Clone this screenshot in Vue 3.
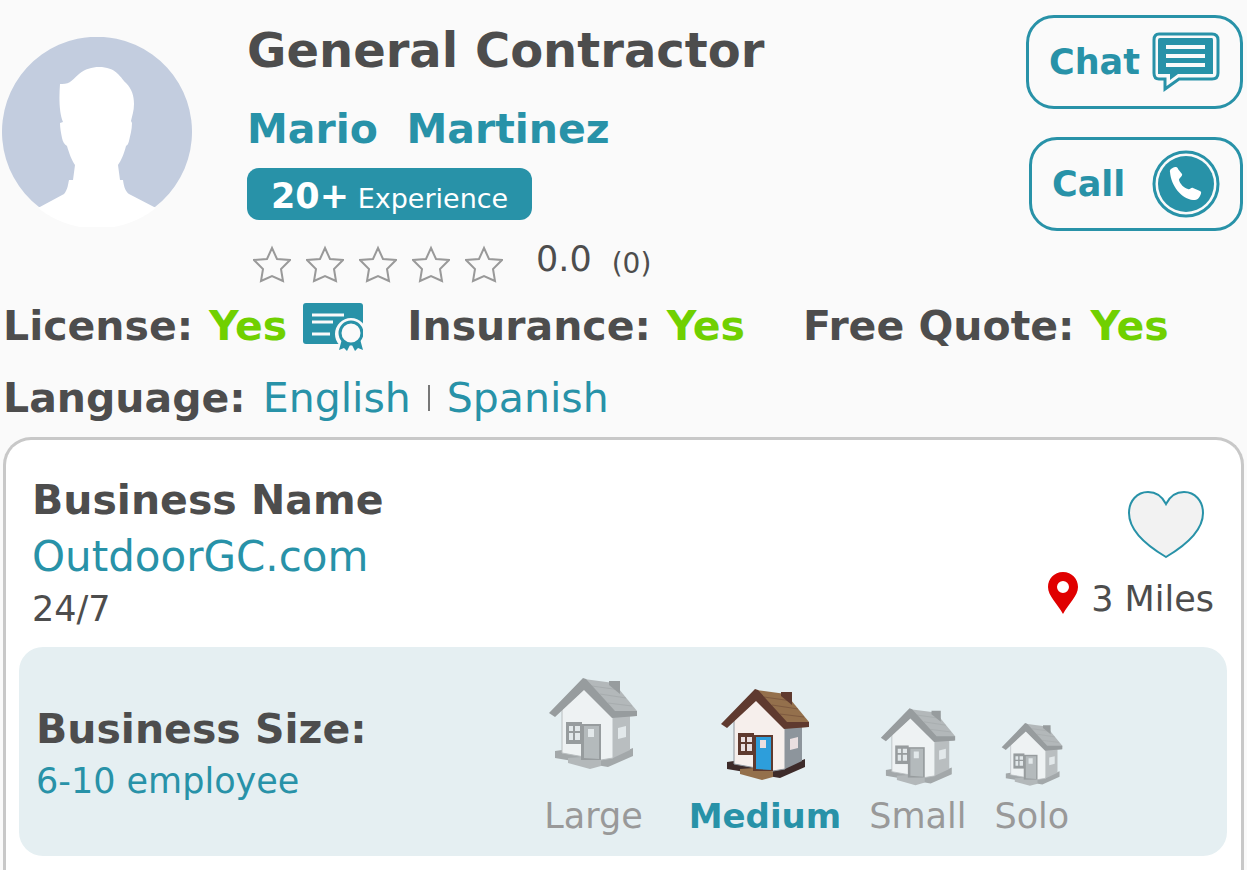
<template>
  <main class="profile">
    <header class="profile-header">
      <svg class="avatar" viewBox="0 0 190 190" aria-hidden="true">
        <path
          d="M37 170A95 95 0 1 1 153 170Z"
          fill="#c3cddf"
        />
        <path
          d="M58 47C68 48 71 42 77 37C83 32 90 30 97 30C105 30 111 32 116 37C120 41 121 43 124 46C130 52 132 59 132 67C132 74 130 79 129 84L130 86C130 93 128 99 127 104C126 108 125 108 124 109C122 117 119 124 116 128L118 143H121C122 151 124 155 127 157L154 171A95 95 0 0 1 36 171L62 157C66 152 66 147 67 143H71L73 128C70 124 67 116 65 109C62 107 61 105 60 101C59 96 58 91 58 86L61 85C57 75 57 60 58 47Z"
          fill="#fff"
        />
      </svg>

      <div class="info">
        <h1 class="title">{{ contractor.trade }}</h1>
        <h2 class="name">{{ contractor.firstName }}&nbsp; {{ contractor.lastName }}</h2>
        <p class="badge"><strong>{{ contractor.years }}</strong> Experience</p>
        <div class="rating">
          <div class="stars">
            <svg v-for="n in 5" :key="n" class="star" viewBox="0 0 38 38" aria-hidden="true">
              <path d="M19 3L24 14L37 15L28 24L30 36L19 31L8 36L10 24L1 15L14 14Z" />
            </svg>
          </div>
          <span class="score">{{ contractor.score }}</span>
          <span class="reviews">({{ contractor.reviews }})</span>
        </div>
      </div>

      <div class="actions">
        <button class="btn-action" type="button">
          Chat
          <svg class="chat-icon" viewBox="0 0 68 61" aria-hidden="true">
            <path
              d="M7 2H60Q66 2 66 8V41Q66 47 60 47H27L13 57V47H7Q2 47 2 41V8Q2 2 7 2Z"
              fill="none"
              stroke="#2892a8"
              stroke-width="3"
            />
            <path d="M8 6H60Q61 6 61 8V42H26L18 48V42H6V8Q6 6 8 6Z" fill="#2892a8" />
            <path d="M14 15H53M14 24H53M14 33H53" stroke="#fafafa" stroke-width="4" />
          </svg>
        </button>
        <button class="btn-action btn-action--call" type="button">
          Call
          <svg class="call-icon" viewBox="0 0 68 68" aria-hidden="true">
            <circle cx="34" cy="34" r="32" fill="none" stroke="#2892a8" stroke-width="3" />
            <circle cx="34" cy="34" r="28" fill="#2892a8" />
            <path
              d="M18 22C17 19 22 17 24 17C25 17 26 18 26 19L30 24C31 26 27 28 27 30C28 34 32 38 36 39C38 40 39 37 41 38L48 41C50 42 49 44 48 46C46 50 44 50 41 50C30 49 19 36 18 22Z"
              fill="#fff"
            />
          </svg>
        </button>
      </div>
    </header>

    <section class="facts">
      <p class="fact">
        License: <span class="yes">Yes</span>
        <svg class="license-icon" viewBox="0 0 60 48" aria-hidden="true">
          <path d="M3 0H57Q60 0 60 3V41H3Q0 41 0 38V3Q0 0 3 0Z" fill="#2892a8" />
          <path d="M9 12H41M9 19H30M9 31H27" stroke="#fafafa" stroke-width="3" />
          <circle cx="48" cy="31" r="16" fill="#fafafa" />
          <path d="M33 41H60V48H33Z" fill="#fafafa" />
          <path d="M39 36L36 47L41 45L44 48L48 40L52 48L55 45L60 47L57 36Z" fill="#2892a8" />
          <circle cx="48" cy="30" r="11" fill="#fafafa" stroke="#2892a8" stroke-width="3" />
        </svg>
      </p>
      <p class="fact">Insurance: <span class="yes">Yes</span></p>
      <p class="fact fact--quote">Free Quote: <span class="yes">Yes</span></p>
    </section>

    <section class="languages">
      <strong>Language:</strong>
      <ul class="language-list">
        <li v-for="language in contractor.languages" :key="language">{{ language }}</li>
      </ul>
    </section>

    <section class="card">
      <div class="business">
        <div>
          <h3 class="heading">Business Name</h3>
          <a class="site" href="#">{{ contractor.site }}</a>
          <p class="hours">24/7</p>
        </div>
        <div class="nearby">
          <button class="btn-favorite" type="button" aria-label="Add to favorites">
            <svg class="heart" viewBox="0 0 76 68" aria-hidden="true">
              <path
                d="M38 13C34 5 27 1 20 1C9 1 1 10 1 22C1 38 16 53 38 66C60 53 75 38 75 22C75 10 67 1 56 1C49 1 42 5 38 13Z"
                fill="#f2f2f2"
                stroke="#2892a8"
                stroke-width="2"
              />
            </svg>
          </button>
          <p class="distance">
            <svg class="pin" viewBox="0 0 30 42" aria-hidden="true">
              <path
                d="M15 0C6 0 0 7 0 15C0 24 9 31 15 42C21 31 30 24 30 15C30 7 24 0 15 0ZM15 9A6 6 0 1 1 15 21A6 6 0 1 1 15 9Z"
                fill="#e00000"
                fill-rule="evenodd"
              />
            </svg>
            {{ contractor.distance }}
          </p>
        </div>
      </div>

      <div class="size-panel">
        <div class="size-text">
          <h3 class="heading">Business Size:</h3>
          <p>{{ contractor.employees }}</p>
        </div>
        <ul class="size-list">
          <li
            v-for="size in sizes"
            :key="size.id"
            :class="`size size--${size.id} ${size.id === selectedSize ? 'size--active' : ''}`"
          >
            <svg class="house" viewBox="0 0 90 94" aria-hidden="true">
              <path class="house-base" d="M7 73L14 72L62 79L85 70V78L60 89L7 80Z" />
              <path class="house-step" d="M20 80L34 79L53 82V88L42 91L20 85Z" />
              <path class="house-wall" d="M14 31L36 11L65 38V80L53 82L14 75Z" />
              <path class="house-side" d="M65 38L82 36V72L65 80Z" />
              <path class="house-roof" d="M36 1L66 5L89 33L88 38L66 39L36 10Z" />
              <path class="house-tiles" d="M44 8L72 12M52 16L78 20M60 25L84 28" />
              <path class="house-trim" d="M35 0L38 1L67 33L89 33V38L64 40L36 12L7 39L1 35Z" />
              <path class="house-chimney" d="M61 3H72V16L61 7Z" />
              <path class="house-frame" d="M18 44H34V66H18Z" />
              <path class="house-pane" d="M21 48H25V53H21ZM27 48H32V53H27ZM21 55H25V62H21ZM27 55H32V62H27Z" />
              <path class="house-frame" d="M33 46H53V82H33Z" />
              <path class="house-door" d="M36 48H51V81L36 80Z" />
              <path class="house-pane" d="M40 51H46V59H40ZM70 50L78 48V59L70 61Z" />
            </svg>
            <span class="size-label">{{ size.label }}</span>
          </li>
        </ul>
      </div>
    </section>
  </main>
</template>

<script setup>
import { ref } from 'vue'

const contractor = {
  trade: 'General Contractor',
  firstName: 'Mario',
  lastName: 'Martinez',
  years: '20+',
  score: '0.0',
  reviews: 0,
  languages: ['English', 'Spanish'],
  site: 'OutdoorGC.com',
  distance: '3 Miles',
  employees: '6-10 employee',
}

const sizes = [
  { id: 'large', label: 'Large' },
  { id: 'medium', label: 'Medium' },
  { id: 'small', label: 'Small' },
  { id: 'solo', label: 'Solo' },
]

const selectedSize = ref('medium')
</script>

<style>
body {
  background-color: #fafafa;
}
</style>

<style scoped>
.profile {
  display: flex;
  flex-direction: column;
  min-height: 100vh;
  color: #4d4d4d;
  background-color: #fafafa;
  font-family: 'DejaVu Sans', Verdana, sans-serif;
  font-size: 35px;
  line-height: 50px;
}

h1,
h2,
h3,
p,
ul {
  margin: 0;
  padding: 0;
}

ul {
  list-style: none;
}

svg {
  display: block;
  flex: none;
}

button {
  font: inherit;
  cursor: pointer;
}

.profile-header {
  display: flex;
  padding: 0 4px 0 2px;
}

.avatar {
  width: 190px;
  height: 190px;
  margin-top: 37px;
}

.info {
  flex: 1;
  padding: 20px 0 0 55px;
}

.title {
  font-size: 48px;
  line-height: 60px;
}

.name {
  margin-top: 24px;
  color: #2892a8;
  font-size: 41px;
  line-height: 50px;
}

.badge {
  box-sizing: border-box;
  width: fit-content;
  height: 52px;
  margin-top: 14px;
  padding: 5px 24px 0;
  border-radius: 12px;
  color: #fff;
  background-color: #2892a8;
  font-size: 27px;
  line-height: 47px;
}

.badge strong {
  font-size: 35px;
}

.rating {
  display: flex;
  align-items: center;
  height: 40px;
  margin-top: 24px;
  padding-left: 6px;
}

.stars {
  display: flex;
  gap: 15px;
}

.star {
  width: 38px;
  height: 38px;
  fill: none;
  stroke: #999;
  stroke-width: 2;
}

.score {
  padding-bottom: 10px;
  margin-left: 33px;
}

.reviews {
  margin-left: 20px;
  font-size: 28px;
}

.actions {
  display: flex;
  flex-direction: column;
  align-items: flex-end;
  gap: 28px;
  padding-top: 15px;
}

.btn-action {
  display: flex;
  align-items: center;
  justify-content: space-between;
  width: 217px;
  height: 94px;
  padding: 0 20px;
  border: 3px solid #2892a8;
  border-radius: 28px;
  color: #2892a8;
  background-color: transparent;
  font-weight: bold;
}

.btn-action--call {
  width: 214px;
}

.chat-icon {
  width: 68px;
  height: 61px;
}

.call-icon {
  width: 68px;
  height: 68px;
}

.facts {
  display: flex;
  margin-top: 17px;
  padding-left: 3px;
  gap: 44px;
  font-size: 41px;
  font-weight: bold;
}

.fact {
  display: flex;
  gap: 16px;
  white-space: nowrap;
}

.fact--quote {
  margin-left: 14px;
}

.yes {
  color: #70d000;
}

.license-icon {
  width: 60px;
  height: 48px;
  margin-top: 2px;
}

.languages {
  display: flex;
  gap: 17px;
  margin-top: 22px;
  padding-left: 3px;
  font-size: 41px;
}

.language-list {
  display: flex;
  align-items: center;
  color: #2892a8;
}

.language-list li + li {
  display: flex;
  align-items: center;
}

.language-list li + li::before {
  content: '';
  width: 2px;
  height: 26px;
  margin: 0 17px;
  background-color: #777;
}

.card {
  flex: 1;
  margin: 14px 3px 0;
  padding: 34px 14px 14px 13px;
  border: 3px solid #c8c8c8;
  border-bottom: 0;
  border-radius: 28px 28px 0 0;
  background-color: #fff;
}

.business {
  display: flex;
  justify-content: space-between;
  padding: 0 13px;
}

.heading {
  font-size: 41px;
  line-height: 52px;
}

.site {
  display: block;
  margin-top: 6px;
  color: #2892a8;
  font-size: 42px;
  text-decoration: none;
}

.hours {
  margin-top: 2px;
}

.nearby {
  display: flex;
  flex-direction: column;
  align-items: flex-end;
  justify-content: space-between;
  padding-top: 17px;
}

.btn-favorite {
  margin-right: 10px;
  padding: 0;
  border: 0;
  background: none;
}

.heart {
  width: 76px;
  height: 68px;
}

.distance {
  display: flex;
  align-items: center;
  gap: 13px;
  padding-bottom: 8px;
}

.pin {
  width: 30px;
  height: 42px;
  margin-bottom: 12px;
}

.size-panel {
  display: flex;
  box-sizing: border-box;
  min-height: 209px;
  margin-top: 13px;
  padding: 0 0 20px 17px;
  border-radius: 24px;
  background-color: #e5eff2;
}

.size-text {
  width: 42%;
  padding-top: 56px;
  color: #2892a8;
  line-height: 52px;
}

.size-text .heading {
  color: #4d4d4d;
}

.size-list {
  display: flex;
  align-items: flex-end;
  gap: 28px;
  color: #999;
  line-height: 40px;
}

.size {
  display: flex;
  flex-direction: column;
  align-items: center;
}

.size--large {
  padding: 0 18px 0 8px;
}

.house {
  --base: #a3a8aa;
  --wall: #eef2f3;
  --side: #b9bec0;
  --roof: #b3b8ba;
  --trim: #979c9e;
  --door: #b4babc;
  --pane: #e2e8ea;
  width: 90px;
  height: 94px;
  margin-bottom: 24px;
}

.size--medium .house {
  margin-bottom: 13px;
}

.size--small .house {
  width: 76px;
  height: 80px;
  margin-bottom: 8px;
}

.size--solo .house {
  width: 62px;
  height: 65px;
  margin-bottom: 8px;
}

.size--active {
  color: #2892a8;
  font-size: 34px;
  font-weight: bold;
}

.size--active .house {
  --base: #3d2b2a;
  --wall: #f6efec;
  --side: #8d959c;
  --roof: #94704c;
  --trim: #5f3a2f;
  --door: #2d9edb;
  --pane: #eadfe0;
}

.house-base {
  fill: var(--base);
}

.house-step {
  fill: var(--roof);
}

.house-wall {
  fill: var(--wall);
  stroke: var(--side);
}

.house-side {
  fill: var(--side);
}

.house-roof {
  fill: var(--roof);
}

.house-tiles {
  stroke: var(--trim);
  opacity: 0.4;
}

.house-trim,
.house-chimney,
.house-frame {
  fill: var(--trim);
}

.house-door {
  fill: var(--door);
}

.house-pane {
  fill: var(--pane);
}
</style>
